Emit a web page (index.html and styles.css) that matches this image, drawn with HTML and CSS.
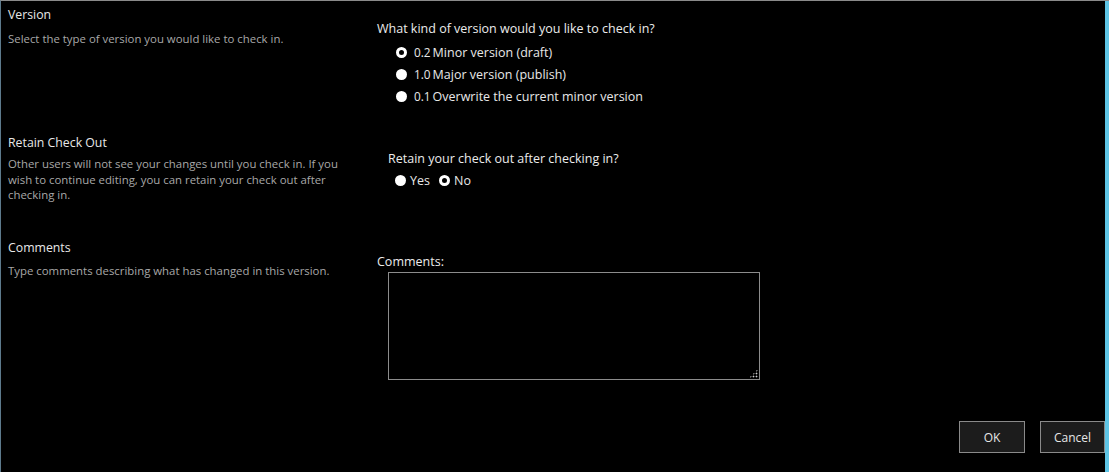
FILE: index.html
```html
<!DOCTYPE html>
<html>
<head>
<meta charset="utf-8">
<link rel="stylesheet" href="styles.css">
</head>
<body>
<div class="frame">
  <div class="content">
    <section class="row row-version">
      <div class="left">
        <h3 class="title">Version</h3>
        <p class="desc">Select the type of version you would like to check in.</p>
      </div>
      <div class="right">
        <div class="question">What kind of version would you like to check in?</div>
        <div class="options">
          <label class="opt"><span class="radio checked"></span><span class="num">0.2</span> Minor version (draft)</label>
          <label class="opt"><span class="radio"></span><span class="num">1.0</span> Major version (publish)</label>
          <label class="opt"><span class="radio"></span><span class="num">0.1</span> Overwrite the current minor version</label>
        </div>
      </div>
    </section>
    <section class="row row-retain">
      <div class="left">
        <h3 class="title">Retain Check Out</h3>
        <p class="desc">Other users will not see your changes until you check in. If you wish to continue editing, you can retain your check out after checking in.</p>
      </div>
      <div class="right indent">
        <div class="question">Retain your check out after checking in?</div>
        <div class="inline-opts">
          <label class="opt-inline"><span class="radio"></span>Yes</label>
          <label class="opt-inline"><span class="radio checked"></span>No</label>
        </div>
      </div>
    </section>
    <section class="row row-comments">
      <div class="left">
        <h3 class="title">Comments</h3>
        <p class="desc">Type comments describing what has changed in this version.</p>
      </div>
      <div class="right">
        <div class="question">Comments:</div>
        <div class="textarea"><span class="grip"></span></div>
      </div>
    </section>
    <div class="buttons">
      <button class="btn ok">OK</button>
      <button class="btn cancel">Cancel</button>
    </div>
  </div>
  <div class="scrollbar"></div>
</div>
</body>
</html>
```
FILE: styles.css
```css
* { box-sizing: border-box; }
html, body { margin: 0; padding: 0; background: #000; }
body {
  width: 1109px; height: 472px; overflow: hidden;
  font-family: "Open Sans", "Noto Sans", sans-serif;
}
.frame {
  display: flex;
  height: 472px;
  border-top: 1px solid #8a8a8a;
  border-left: 1px solid #5d7a8c;
}
.content { flex: 1; position: relative; }
.scrollbar { width: 4px; background: #5ec5e6; }
.row { display: grid; grid-template-columns: 376px 1fr; }
.left { padding-left: 7px; }
.title {
  margin: 0; font-weight: normal; font-size: 12.3px; color: #e8e8e8; line-height: 16px;
}
.desc { margin: 0; font-size: 11.4px; color: #a8a8a8; line-height: 15.5px; width: 340px; }
.row-version { height: 134px; padding-top: 6px; }
.row-version .desc { margin-top: 8px; }
.row-version .right { padding-top: 14px; }
.question { font-size: 12.5px; color: #ececec; line-height: 16px; }
.options { padding-left: 19px; padding-top: 4px; }
.opt { display: flex; align-items: center; height: 22px; font-size: 12.5px; color: #e8e8e8; }
.num { margin-left: 7px; margin-right: 2px; font-size: 11.8px; }
.radio {
  width: 11px; height: 11px; border-radius: 50%; background: #fff; flex: none; display: inline-block;
}
.radio.checked { background: #000; border: 3px solid #fff; }
.row-retain { height: 105px; padding-top: 0; }
.row-retain .desc { margin-top: 5px; }
.indent { padding-left: 11px; padding-top: 16px; }
.inline-opts { display: flex; gap: 9px; padding-left: 7px; padding-top: 5px; }
.opt-inline { display: flex; align-items: center; gap: 4px; font-size: 12.5px; color: #e8e8e8; }
.row-comments .desc { margin-top: 7px; }
.row-comments .right { padding-top: 14px; }
.textarea {
  position: relative; margin-left: 11px; margin-top: 2px; width: 372px; height: 108px;
  border: 1px solid #8c8c8c; background: #000;
}
.grip {
  position: absolute; right: 1px; bottom: 1px; width: 9px; height: 9px;
  background:
    radial-gradient(circle, #ccc 0.8px, transparent 1.1px) 0 0 / 3px 3px;
  clip-path: polygon(100% 0, 100% 100%, 0 100%);
}
.buttons {
  display: flex; justify-content: flex-end; gap: 15px; margin-top: 41px; margin-right: 0;
}
.btn {
  font-family: inherit; font-size: 12px; color: #e6e6e6; background: #1c1c1c;
  border: 1px solid #8a8a8a; height: 32px; padding: 0;
}
.ok { width: 66px; }
.cancel { width: 65px; }
```
